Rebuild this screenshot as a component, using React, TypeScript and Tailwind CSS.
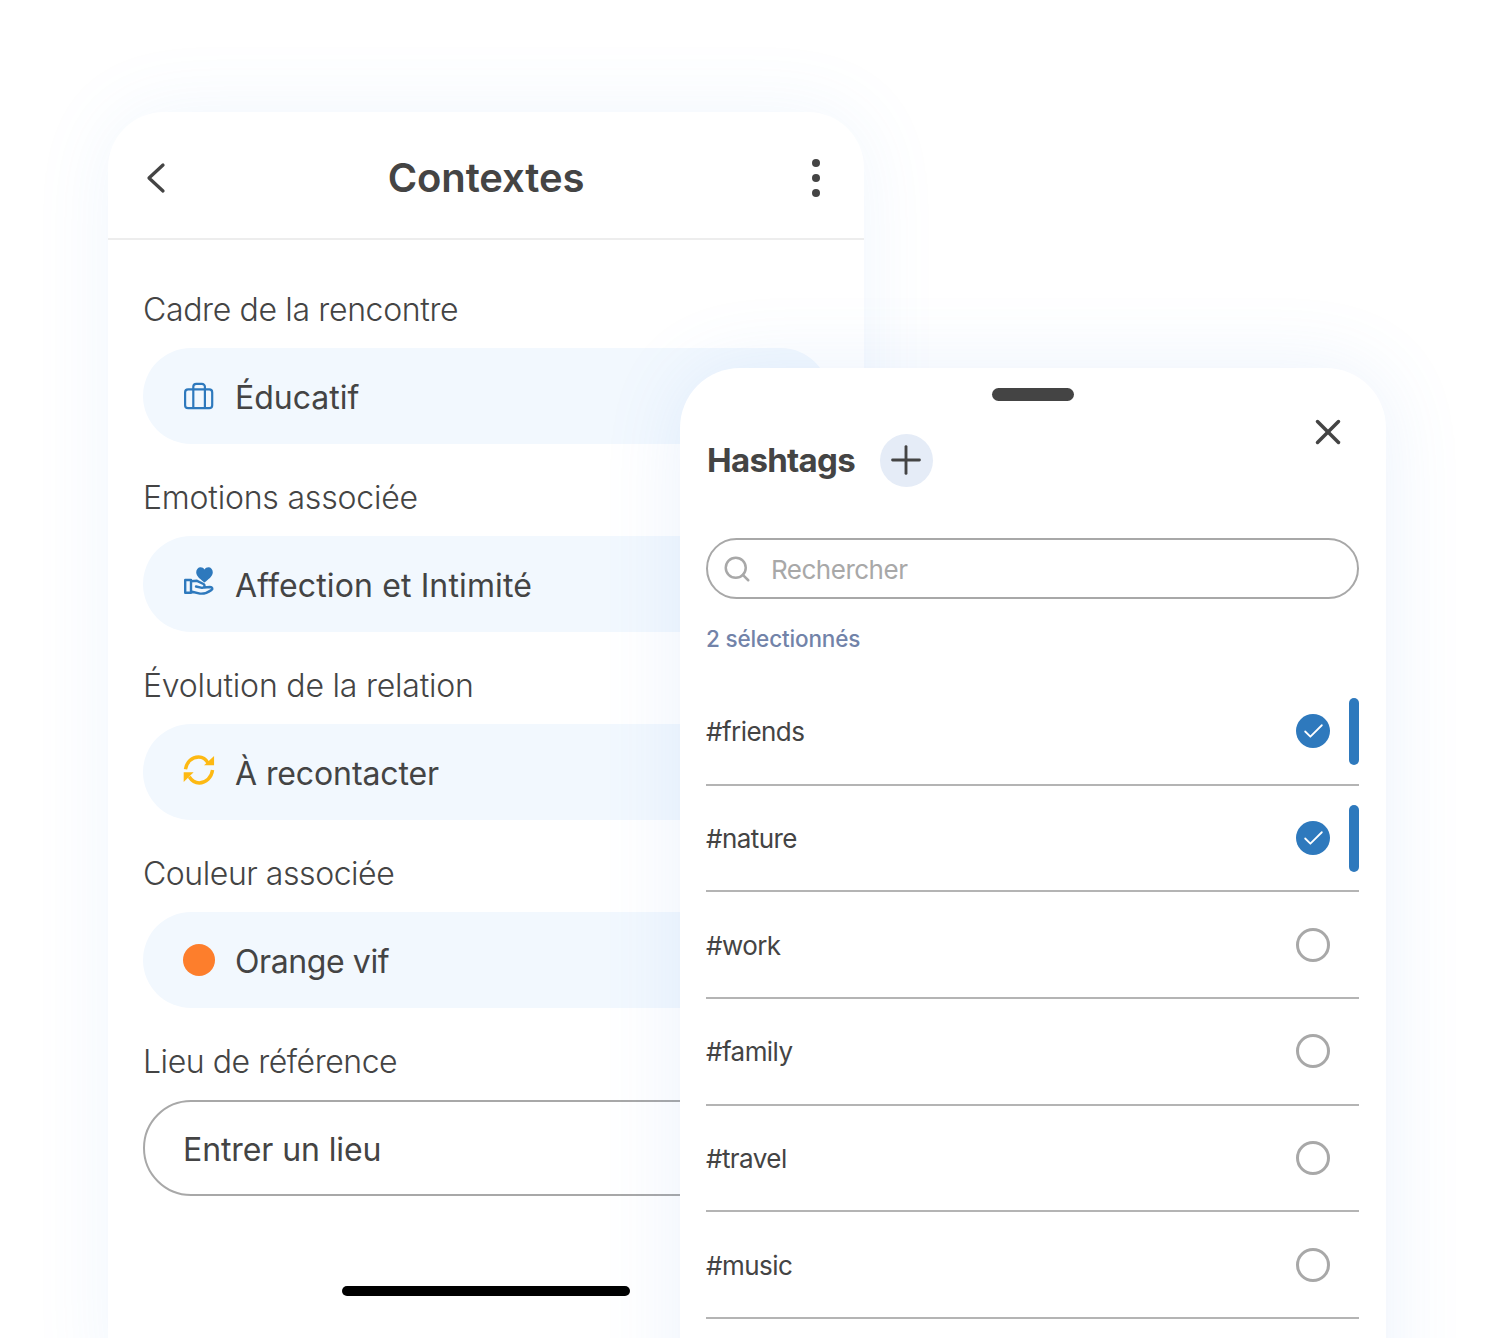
import { Check, Plus, Search, X } from 'lucide-react';

const fields = [
    { label: 'Cadre de la rencontre', labelTrack: 'tracking-[-0.35px]', value: 'Éducatif', valueTrack: 'tracking-[0px]', icon: 'case' },
    { label: 'Emotions associée', labelTrack: 'tracking-[-0.2px]', value: 'Affection et Intimité', valueTrack: 'tracking-[0.13px]', icon: 'hand' },
    { label: 'Évolution de la relation', labelTrack: 'tracking-[-0.2px]', value: 'À recontacter', valueTrack: 'tracking-[-0.1px]', icon: 'sync' },
    { label: 'Couleur associée', labelTrack: 'tracking-[-0.45px]', value: 'Orange vif', valueTrack: 'tracking-[-0.4px]', icon: 'dot' },
];

const hashtags = [
    { name: '#friends', selected: true },
    { name: '#nature', selected: true },
    { name: '#work', selected: false },
    { name: '#family', selected: false },
    { name: '#travel', selected: false },
    { name: '#music', selected: false },
];

const FieldIcon = ({ type }: { type: string }) => {
    if (type === 'case') {
        return (
            <svg width="32" height="32" viewBox="0 0 32 32" fill="none" stroke="#2e79bd" strokeWidth="2.2" strokeLinejoin="round">
                <rect x="2.1" y="9.4" width="27.1" height="18.8" rx="3" />
                <path d="M10.3 9.4V28.2M21.9 9.4V28.2M10.3 9.4V6.8a3 3 0 0 1 3-3h5.6a3 3 0 0 1 3 3V9.4" />
            </svg>
        );
    }
    if (type === 'hand') {
        return (
            <svg width="32" height="32" viewBox="0 0 32 32" fill="none" className="overflow-visible">
                <path d="M21.5 14.5C18 11.5 13.2 8.5 13.2 4.2C13.2 1.2 15.2 -0.8 17.6 -0.8C19.2 -0.8 20.6 0 21.5 1.4C22.4 0 23.8 -0.8 25.4 -0.8C27.8 -0.8 29.8 1.2 29.8 4.2C29.8 8.5 25 11.5 21.5 14.5Z" fill="#2e79bd" />
                <path d="M2.2 12H8V24.8H2.2ZM8 13.2L14 12.8L20.5 16C22.5 17.5 21.5 20 19 19.8L13 18.5M21 19.5L27 19C29.5 19 30 21 28.5 22C25 24.5 21 26 17 25.6L8 23.5" stroke="#2e79bd" strokeWidth="2.4" strokeLinejoin="round" strokeLinecap="round" />
            </svg>
        );
    }
    if (type === 'sync') {
        return (
            <svg width="34" height="34" viewBox="0 0 34 34" fill="none" stroke="#fdb913" strokeWidth="3.6" className="-mt-[4px]">
                <path d="M2.6 16.3C3.6 8.8 9.4 3.2 16.6 3.2C20.8 3.2 24.2 5.2 26.8 9.8" />
                <path d="M31.4 17C30.4 25 24.4 30.8 17.2 30.8C13 30.8 9.4 28.6 6.6 24.2" />
                <path d="M33 2V12H22.4Z" fill="#fdb913" stroke="none" />
                <path d="M0.7 29.7V19.3H11.3Z" fill="#fdb913" stroke="none" />
            </svg>
        );
    }
    return <div className="h-8 w-8 rounded-full bg-[#fd7e2c]" />;
};

const ContextCard = () => (
    <div className="absolute left-[108px] top-[112px] flex h-[1300px] w-[756px] flex-col rounded-[56px] bg-white shadow-[0_0_80px_rgba(90,150,230,0.09)]">
        <header className="flex h-[128px] shrink-0 items-center justify-between border-b-2 border-[#ededed] pl-[28px] pr-[26px] pt-[6px]">
            <svg width="42" height="42" viewBox="0 0 42 42" fill="none" stroke="#444444" strokeWidth="3.3" strokeLinecap="round" strokeLinejoin="round">
                <path d="M27 8L13 21L27 34" />
            </svg>
            <h1 className="text-[40px] font-semibold leading-none tracking-[-0.1px] text-[#444444]">Contextes</h1>
            <div className="flex w-[44px] flex-col items-center gap-[7px]">
                <span className="h-[8px] w-[8px] rounded-full bg-[#444444]" />
                <span className="h-[8px] w-[8px] rounded-full bg-[#444444]" />
                <span className="h-[8px] w-[8px] rounded-full bg-[#444444]" />
            </div>
        </header>
        <div className="flex flex-col pl-[35px] pr-[35px] pt-[32px]">
            {fields.map((field) => (
                <div key={field.label} className="flex h-[188px] flex-col">
                    <p className={`h-[76px] pt-[16px] text-[32px] font-light leading-[44px] text-[#444444] ${field.labelTrack}`}>{field.label}</p>
                    <div className="flex h-[96px] items-center rounded-full bg-[#f2f8fe] pl-[40px]">
                        <div className="flex w-[32px] items-center justify-center">
                            <FieldIcon type={field.icon} />
                        </div>
                        <span className={`ml-[20px] pt-[3px] text-[32px] font-normal leading-none text-[#444444] ${field.valueTrack}`}>{field.value}</span>
                    </div>
                </div>
            ))}
            <p className="h-[76px] pt-[16px] text-[32px] font-light leading-[44px] tracking-[-0.45px] text-[#444444]">Lieu de référence</p>
            <div className="flex h-[96px] items-center rounded-full border-2 border-[#a8a8a8] pl-[38px]">
                <span className="pt-[3px] text-[32px] leading-none tracking-[-0.1px] text-[#444444]">Entrer un lieu</span>
            </div>
            <div className="mt-[90px] flex justify-center">
                <div className="h-[10px] w-[288px] rounded-full bg-black" />
            </div>
        </div>
    </div>
);

const HashtagRow = ({ name, selected }: { name: string; selected: boolean }) => (
    <div className="flex h-[106.7px] items-center justify-between border-b-2 border-[#b4b4b4]">
        <span className="pt-[2px] text-[26px] leading-none tracking-[-0.55px] text-[#444444]">{name}</span>
        <div className="flex items-center">
            {selected ? (
                <div className="flex h-[34px] w-[34px] items-center justify-center rounded-full bg-[#2e79bd]">
                    <Check size={25} strokeWidth={1.7} className="text-white" />
                </div>
            ) : (
                <div className="h-[34px] w-[34px] rounded-full border-[3px] border-[#a8a8a8]" />
            )}
            <div className={selected ? 'ml-[19px] h-[67px] w-[10px] rounded-full bg-[#2e79bd]' : 'ml-[19px] h-[67px] w-[10px]'} />
        </div>
    </div>
);

const HashtagSheet = () => (
    <div className="absolute left-[680px] top-[368px] flex h-[1100px] w-[706px] flex-col rounded-[60px] bg-white pl-[26px] pr-[27px] shadow-[0_0_80px_rgba(90,150,230,0.12)]">
        <div className="mt-[20px] h-[13px] w-[82px] self-center rounded-full bg-[#444444]" />
        <div className="relative mt-[33px] flex h-[52px] items-center">
            <h2 className="ml-[1px] text-[33px] font-bold leading-none tracking-[-0.7px] text-[#444444]">Hashtags</h2>
            <div className="ml-[25px] flex h-[53px] w-[53px] items-center justify-center rounded-full bg-[#e5ecf7]">
                <Plus size={46} strokeWidth={1.5} className="text-[#444444]" />
            </div>
            <X size={42} strokeWidth={2} className="absolute right-[10px] top-[-23px] text-[#444444]" />
        </div>
        <div className="mt-[52px] flex h-[61px] items-center rounded-full border-2 border-[#a8a8a8] pl-[14px]">
            <Search size={30} strokeWidth={2} className="text-[#a8a8a8]" />
            <span className="ml-[19px] pt-[2px] text-[26px] leading-none tracking-[-0.5px] text-[#a8a8a8]">Rechercher</span>
        </div>
        <p className="mt-[26px] text-[22.5px] font-medium leading-[28px] tracking-[-0.15px] text-[#7283a9]">2 sélectionnés</p>
        <div className="mt-[26px] flex flex-col">
            {hashtags.map((tag) => (
                <HashtagRow key={tag.name} name={tag.name} selected={tag.selected} />
            ))}
        </div>
    </div>
);

export default function App() {
    return (
        <div className="relative h-[1338px] w-[1494px] overflow-hidden bg-white font-['Inter',sans-serif]">
            <ContextCard />
            <HashtagSheet />
        </div>
    );
}
